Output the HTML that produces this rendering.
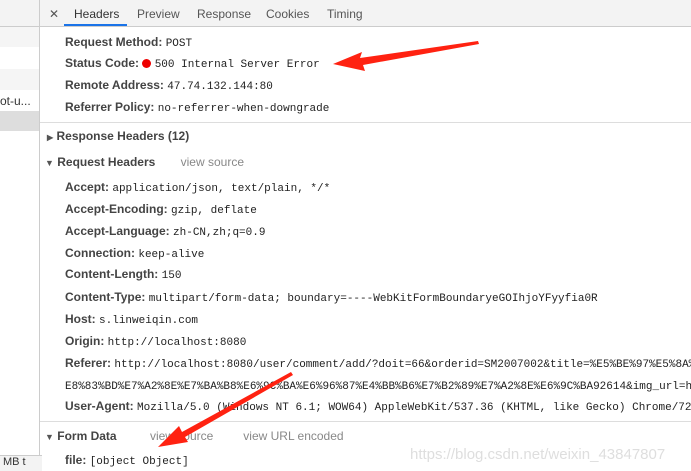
<!DOCTYPE html>
<html><head><style>
body{margin:0;width:691px;height:470px;overflow:hidden;background:#fff;position:relative;font-family:"Liberation Sans",sans-serif}
.l{position:absolute;left:0;width:39px;border-right:1px solid #ccc}
.r{position:absolute;left:65px;font-size:12px;color:#303942;white-space:nowrap;line-height:14px}
.r b{font-weight:bold;color:#444}
.m{font-family:"Liberation Mono",monospace;font-size:11px;color:#222}
.s{position:absolute;font-size:12px;font-weight:bold;color:#444;white-space:nowrap}
.g{font-weight:normal;color:#888;font-size:12px}
.tab{position:absolute;top:7px;font-size:12px;color:#555}
</style></head><body>
<div class="l" style="top:0;height:470px;background:#fff"></div>
<div style="position:absolute;left:0;top:0;width:39px;height:26px;background:#f3f3f3;border-bottom:1px solid #ccc"></div>
<div style="position:absolute;left:0;top:27px;width:39px;height:20px;background:#f5f5f5"></div>
<div style="position:absolute;left:0;top:69px;width:39px;height:21px;background:#f5f5f5"></div>
<div style="position:absolute;left:0;top:94px;font-size:12px;color:#333">ot-u...</div>
<div style="position:absolute;left:0;top:111px;width:39px;height:20px;background:#ddd"></div>
<div style="position:absolute;left:0;top:455px;width:39px;height:15px;border-top:1px solid #ccc;background:#f3f3f3;font-size:11px;color:#333;padding-left:3px">MB t</div>
<div style="position:absolute;left:40px;top:0;width:651px;height:26px;background:#f3f3f3;border-bottom:1px solid #ccc"></div>
<div class="tab" style="left:49px;color:#555">✕</div>
<div class="tab" style="left:74px;color:#333">Headers</div>
<div style="position:absolute;left:64px;top:24px;width:63px;height:2px;background:#1a73e8"></div>
<div class="tab" style="left:137px">Preview</div>
<div class="tab" style="left:197px">Response</div>
<div class="tab" style="left:266px">Cookies</div>
<div class="tab" style="left:327px">Timing</div>

<div class="r" style="top:35px"><b>Request Method:</b> <span class="m">POST</span></div>
<div class="r" style="top:56px"><b>Status Code:</b> <span style="display:inline-block;width:9px;height:9px;border-radius:50%;background:#e00;vertical-align:-1px"></span> <span class="m">500 Internal Server Error</span></div>
<div class="r" style="top:78px"><b>Remote Address:</b> <span class="m">47.74.132.144:80</span></div>
<div class="r" style="top:100px"><b>Referrer Policy:</b> <span class="m">no-referrer-when-downgrade</span></div>
<div style="position:absolute;left:40px;top:122px;width:651px;height:1px;background:#ddd"></div>
<div class="s" style="left:47px;top:129px"><span style="font-size:8px;color:#555">▶</span> Response Headers (12)</div>
<div class="s" style="left:45px;top:155px"><span style="font-size:9px;color:#555">▼</span> Request Headers <span class="g" style="margin-left:22px">view source</span></div>
<div class="r" style="top:180px"><b>Accept:</b> <span class="m">application/json, text/plain, */*</span></div>
<div class="r" style="top:202px"><b>Accept-Encoding:</b> <span class="m">gzip, deflate</span></div>
<div class="r" style="top:224px"><b>Accept-Language:</b> <span class="m">zh-CN,zh;q=0.9</span></div>
<div class="r" style="top:246px"><b>Connection:</b> <span class="m">keep-alive</span></div>
<div class="r" style="top:267px"><b>Content-Length:</b> <span class="m">150</span></div>
<div class="r" style="top:290px"><b>Content-Type:</b> <span class="m">multipart/form-data; boundary=----WebKitFormBoundaryeGOIhjoYFyyfia0R</span></div>
<div class="r" style="top:312px"><b>Host:</b> <span class="m">s.linweiqin.com</span></div>
<div class="r" style="top:334px"><b>Origin:</b> <span class="m">http://localhost:8080</span></div>
<div class="r" style="top:356px"><b>Referer:</b> <span class="m">http://localhost:8080/user/comment/add/?doit=66&amp;orderid=SM2007002&amp;title=%E5%BE%97%E5%8A%</span></div>
<div class="r" style="top:378px"><span class="m">E8%83%BD%E7%A2%8E%E7%BA%B8%E6%9C%BA%E6%96%87%E4%BB%B6%E7%B2%89%E7%A2%8E%E6%9C%BA92614&amp;img_url=h</span></div>
<div class="r" style="top:399px"><b>User-Agent:</b> <span class="m">Mozilla/5.0 (Windows NT 6.1; WOW64) AppleWebKit/537.36 (KHTML, like Gecko) Chrome/72</span></div>
<div style="position:absolute;left:40px;top:421px;width:651px;height:1px;background:#ddd"></div>
<div class="s" style="left:45px;top:429px"><span style="font-size:9px;color:#555">▼</span> Form Data <span class="g" style="margin-left:30px">view source</span><span class="g" style="margin-left:30px">view URL encoded</span></div>
<div class="r" style="top:453px"><b>file:</b> <span class="m">[object Object]</span></div>
<div style="position:absolute;left:410px;top:446px;font-size:15px;color:rgba(190,190,190,0.5)">https://blog.csdn.net/weixin_43847807</div>
<svg style="position:absolute;left:0;top:0" width="691" height="470">
<polygon points="478,41 360,58 362,52 333,64 365,71 363,65 479,44" fill="#f21"/>
<polygon points="291,372 182,432 179,426 158,447 188,442 185,437 293,375" fill="#f21"/>
</svg>
</body></html>
